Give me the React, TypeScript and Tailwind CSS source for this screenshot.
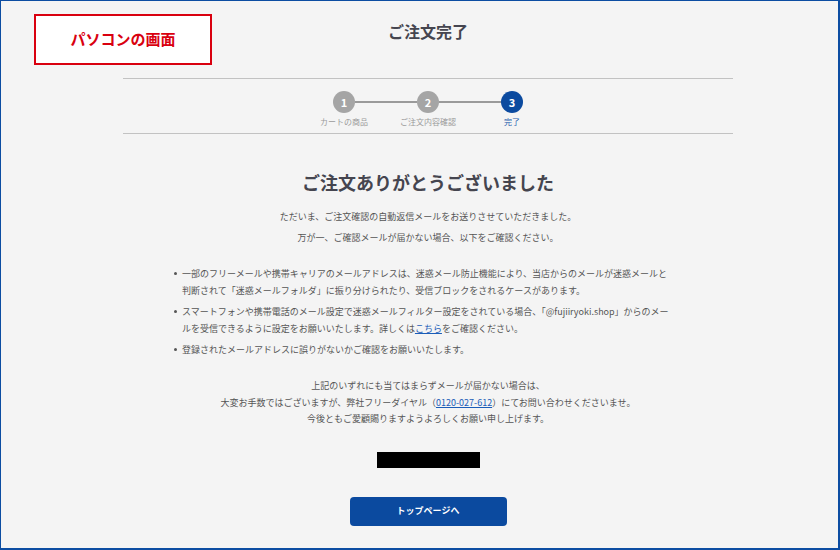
import React from "react";

const font = { fontFamily: '"Noto Sans CJK JP", "Noto Sans", sans-serif' };

function Step({ n, label, active }: { n: string; label: string; active?: boolean }) {
  return (
    <div className="flex w-[22px] flex-col items-center">
      <div
        className={`flex h-[22px] w-[22px] items-center justify-center rounded-full text-[11px] font-bold leading-none text-white ${
          active ? "bg-[#0b4a9f]" : "bg-[#a5a5a5]"
        }`}
      >
        {n}
      </div>
      <div
        className={`mt-[3px] whitespace-nowrap text-[8px] leading-[12px] ${
          active ? "text-[#2a5fae]" : "text-[#9a9a9a]"
        }`}
      >
        {label}
      </div>
    </div>
  );
}

function Bullet({ children }: { children: React.ReactNode }) {
  return (
    <li className="flex">
      <span className="mr-[5px] mt-[7px] h-[3px] w-[3px] shrink-0 rounded-full bg-[#555]"></span>
      <span>{children}</span>
    </li>
  );
}

export default function App() {
  return (
    <div
      className="relative h-[550px] w-[840px] overflow-hidden border-b-2 border-l border-r-2 border-t border-[#0c4da2] bg-[#f4f4f4]"
      style={font}
    >
      <div className="absolute left-[33px] top-[13px] flex h-[51px] w-[178px] items-center justify-center border-2 border-[#d9000f] bg-white">
        <span className="text-[15px] font-bold text-[#d9000f]">パソコンの画面</span>
      </div>

      <div className="ml-[122px] w-[610px]">
        <div className="pt-[18px] text-center text-[16px] font-bold leading-[24px] text-[#45454f]">ご注文完了</div>

        <div className="mt-[35px] h-px bg-[#c2c2c2]"></div>

        <div className="flex justify-center pt-[12px] pl-[1px]">
          <div className="ml-[-1px] flex items-start">
            <Step n="1" label="カートの商品" />
            <div className="mt-[10px] h-[2px] w-[62px] bg-[#9a9a9a]"></div>
            <Step n="2" label="ご注文内容確認" />
            <div className="mt-[10px] h-[2px] w-[62px] bg-[#9a9a9a]"></div>
            <Step n="3" label="完了" active />
          </div>
        </div>

        <div className="mt-[5px] h-px bg-[#c2c2c2]"></div>

        <div className="mt-[35px] text-center text-[18px] font-bold leading-[26px] text-[#45454f]">
          ご注文ありがとうございました
        </div>

        <div className="mt-[11px] text-center text-[9px] leading-[21px] text-[#555]">
          <p>ただいま、ご注文確認の自動返信メールをお送りさせていただきました。</p>
          <p>万が一、ご確認メールが届かない場合、以下をご確認ください。</p>
        </div>

        <ul className="ml-[51px] mt-[17px] flex flex-col gap-[4px] text-[9px] leading-[17px] text-[#555]">
          <Bullet>
            一部のフリーメールや携帯キャリアのメールアドレスは、迷惑メール防止機能により、当店からのメールが迷惑メールと
            <br />
            判断されて「迷惑メールフォルダ」に振り分けられたり、受信ブロックをされるケースがあります。
          </Bullet>
          <Bullet>
            スマートフォンや携帯電話のメール設定で迷惑メールフィルター設定をされている場合、「@fujiiryoki.shop」からのメー
            <br />
            ルを受信できるように設定をお願いいたします。詳しくは
            <span className="text-[#1b5db8] underline">こちら</span>
            をご確認ください。
          </Bullet>
          <Bullet>登録されたメールアドレスに誤りがないかご確認をお願いいたします。</Bullet>
        </ul>

        <div className="mt-[20px] text-center text-[9px] leading-[16.5px] text-[#555]">
          <p>上記のいずれにも当てはまらずメールが届かない場合は、</p>
          <p>
            大変お手数ではございますが、弊社フリーダイヤル（
            <span className="text-[#1b5db8] underline">0120-027-612</span>
            ）にてお問い合わせくださいませ。
          </p>
          <p>今後ともご愛顧賜りますようよろしくお願い申し上げます。</p>
        </div>

        <div className="mt-[24px] flex justify-center">
          <div className="h-[16px] w-[103px] bg-black"></div>
        </div>

        <div className="mt-[29px] flex justify-center">
          <button className="h-[29px] w-[157px] rounded-[4px] bg-[#0b4a9f] text-[9px] font-bold text-white">
            トップページへ
          </button>
        </div>
      </div>
    </div>
  );
}
